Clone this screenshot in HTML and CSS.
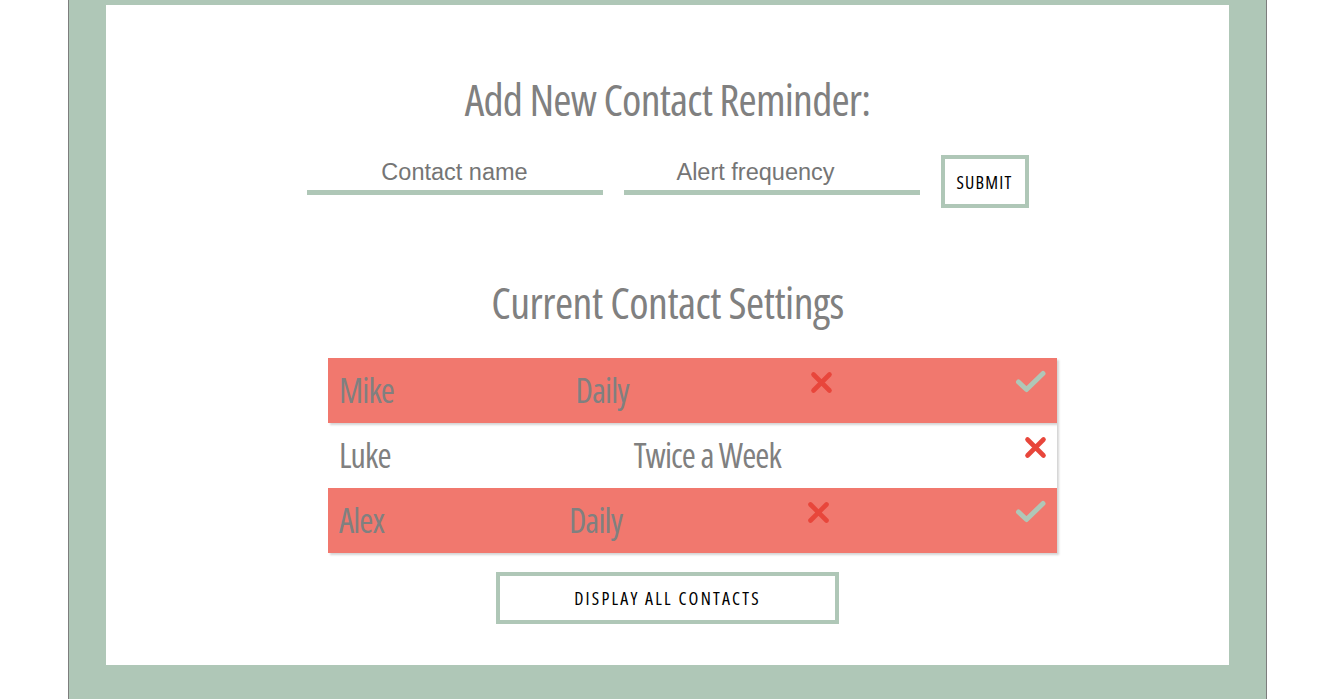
FILE: index.html
```html
<!DOCTYPE html>
<html>
<head>
<meta charset="utf-8">
<title>Contact Reminders</title>
<link rel="stylesheet" href="styles.css">
</head>
<body>
<div class="frame">
  <main class="card">
    <h1 class="title">Add New Contact Reminder:</h1>
    <form class="add-form">
      <input class="field" type="text" placeholder="Contact name">
      <input class="field field-freq" type="text" placeholder="Alert frequency">
      <button class="btn btn-submit" type="button">SUBMIT</button>
    </form>

    <h2 class="title title-settings">Current Contact Settings</h2>
    <div class="contacts">
      <div class="row row-alert">
        <span class="cell">Mike</span>
        <span class="cell">Daily</span>
        <span class="icon icon-x"><svg width="23" height="23" viewBox="0 0 23 23"><path d="M3.5 3.5 L19.5 19.5 M19.5 3.5 L3.5 19.5" stroke="#e8463b" stroke-width="4.6" stroke-linecap="round" fill="none"/></svg></span>
        <span class="icon icon-check"><svg width="32" height="23" viewBox="0 0 32 23"><path d="M3.5 12 L11.5 19.5 L28 3.5" stroke="#afc7b7" stroke-width="5" stroke-linecap="round" stroke-linejoin="round" fill="none"/></svg></span>
      </div>
      <div class="row">
        <span class="cell">Luke</span>
        <span class="cell">Twice a Week</span>
        <span class="icon icon-x"><svg width="23" height="23" viewBox="0 0 23 23"><path d="M3.5 3.5 L19.5 19.5 M19.5 3.5 L3.5 19.5" stroke="#e8463b" stroke-width="4.6" stroke-linecap="round" fill="none"/></svg></span>
      </div>
      <div class="row row-alert">
        <span class="cell">Alex</span>
        <span class="cell">Daily</span>
        <span class="icon icon-x"><svg width="23" height="23" viewBox="0 0 23 23"><path d="M3.5 3.5 L19.5 19.5 M19.5 3.5 L3.5 19.5" stroke="#e8463b" stroke-width="4.6" stroke-linecap="round" fill="none"/></svg></span>
        <span class="icon icon-check"><svg width="32" height="23" viewBox="0 0 32 23"><path d="M3.5 12 L11.5 19.5 L28 3.5" stroke="#afc7b7" stroke-width="5" stroke-linecap="round" stroke-linejoin="round" fill="none"/></svg></span>
      </div>
    </div>
    <div class="actions">
      <button class="btn btn-display" type="button">DISPLAY ALL CONTACTS</button>
    </div>
  </main>
</div>
</body>
</html>
```
FILE: styles.css
```css
* { box-sizing: border-box; }

html, body {
  margin: 0;
  padding: 0;
  height: 100%;
  overflow: hidden;
  background: #ffffff;
}

body {
  font-family: "Open Sans", "Liberation Sans", sans-serif;
}

.frame {
  margin-left: 68px;
  width: 1199px;
  min-height: 100%;
  background: #afc7b7;
  border-left: 1px solid #7d7d7d;
  border-right: 1px solid #7d7d7d;
  padding: 5px 37px 40px 37px;
}

.card {
  background: #ffffff;
  height: 660px;
  padding-top: 72px;
  display: flex;
  flex-direction: column;
}

.title {
  margin: 0;
  font-family: "Open Sans", sans-serif;
  font-stretch: 75%;
  font-weight: 500;
  font-size: 44px;
  letter-spacing: -0.5px;
  line-height: 44px;
  color: #808080;
  text-align: center;
}

h1.title {
  letter-spacing: -0.8px;
}

.add-form {
  display: flex;
  justify-content: center;
  align-items: flex-start;
  gap: 21px;
  margin-top: 34px;
}

.field {
  width: 296px;
  height: 40px;
  border: none;
  border-bottom: 5px solid #afc7b7;
  padding: 0;
  margin: 0;
  font-family: "Liberation Sans", Arial, sans-serif;
  font-size: 23.5px;
  text-align: center;
  color: #757575;
  background: transparent;
  outline: none;
}

.field-freq {
  padding-right: 32px;
}

.field::placeholder {
  color: #757575;
  opacity: 1;
}

.btn {
  background: #ffffff;
  border: 4px solid #afc7b7;
  font-family: "Open Sans", sans-serif;
  font-stretch: 75%;
  font-weight: 500;
  color: #000000;
  margin: 0;
  padding: 0;
  cursor: pointer;
}

.btn-submit {
  width: 88px;
  height: 53px;
  font-size: 18px;
  letter-spacing: 1.2px;
}

.title-settings {
  margin-top: 72px;
}

.contacts {
  margin-top: 34px;
  margin-left: 222px;
  width: 729px;
  display: flex;
  flex-direction: column;
}

.row {
  height: 65px;
  display: flex;
  justify-content: space-between;
  align-items: flex-start;
  padding: 0 10px 0 11px;
  box-shadow: 2px 2px 2px rgba(0, 0, 0, 0.17);
}

.row-alert {
  background: #f1786e;
}

.cell {
  font-family: "Open Sans", sans-serif;
  font-stretch: 75%;
  font-weight: 500;
  font-size: 34px;
  letter-spacing: -0.9px;
  line-height: 65px;
  color: #808080;
}

.icon {
  display: block;
  margin-top: 13px;
  line-height: 0;
}

.icon-check {
  margin-top: 12px;
}

.actions {
  display: flex;
  justify-content: center;
  margin-top: 19px;
}

.btn-display {
  width: 343px;
  height: 52px;
  font-size: 18px;
  letter-spacing: 2.2px;
}
```
